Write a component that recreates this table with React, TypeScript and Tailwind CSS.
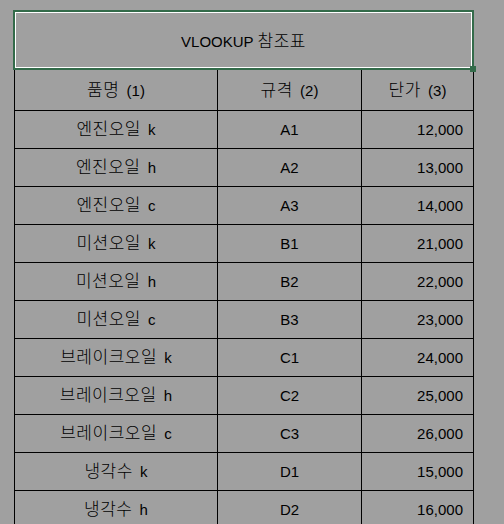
import React from 'react';

type Row = { name: string; spec: string; price: string };

const rows: Row[] = [
  { name: '엔진오일 k', spec: 'A1', price: '12,000' },
  { name: '엔진오일 h', spec: 'A2', price: '13,000' },
  { name: '엔진오일 c', spec: 'A3', price: '14,000' },
  { name: '미션오일 k', spec: 'B1', price: '21,000' },
  { name: '미션오일 h', spec: 'B2', price: '22,000' },
  { name: '미션오일 c', spec: 'B3', price: '23,000' },
  { name: '브레이크오일 k', spec: 'C1', price: '24,000' },
  { name: '브레이크오일 h', spec: 'C2', price: '25,000' },
  { name: '브레이크오일 c', spec: 'C3', price: '26,000' },
  { name: '냉각수 k', spec: 'D1', price: '15,000' },
  { name: '냉각수 h', spec: 'D2', price: '16,000' }
];

// korean runs are drawn a bit larger and lighter, like the sheet's Gulim glyphs
const Txt = ({ text }: { text: string }) => {
  const parts = text.split(/([가-힣]+)/).filter(Boolean);
  return (
    <>
      {parts.map((part, i) =>
        /[가-힣]/.test(part) ? (
          <span
            key={i}
            className={`text-[17px] font-light tracking-[0.5px] ${i < parts.length - 1 ? 'mr-[3px]' : ''}`}
          >
            {part}
          </span>
        ) : (
          <span key={i} className="whitespace-pre">
            {part}
          </span>
        )
      )}
    </>
  );
};

const cell = 'flex items-center border-r border-b border-black leading-none';

export default function App() {
  return (
    <div
      className="h-[524px] w-[504px] overflow-hidden bg-[#a0a0a0] pt-[10px] text-[15px] text-black"
      style={{ fontFamily: "'Liberation Sans', 'Noto Sans CJK KR', sans-serif" }}
    >
      <div className="relative z-10 ml-[13px] h-[60px] w-[461px] border-2 border-[#336b4a]">
        <div className="flex h-full items-center justify-center border border-white pt-[2px] leading-none">
          <Txt text="VLOOKUP 참조표" />
        </div>
        <div className="absolute -bottom-[4px] -right-[4px] h-[6px] w-[6px] bg-[#336b4a]" />
      </div>

      <div className="ml-[14px] grid w-[460px] grid-cols-[203px_144px_112px] border-l border-black">
        <div className={`${cell} h-[41px] justify-center`}>
          <Txt text="품명 (1)" />
        </div>
        <div className={`${cell} h-[41px] justify-center`}>
          <Txt text="규격 (2)" />
        </div>
        <div className={`${cell} h-[41px] justify-center`}>
          <Txt text="단가 (3)" />
        </div>

        {rows.map((row) => (
          <React.Fragment key={row.spec}>
            <div className={`${cell} h-[38px] justify-center`}>
              <Txt text={row.name} />
            </div>
            <div className={`${cell} h-[38px] justify-center`}>{row.spec}</div>
            <div className={`${cell} h-[38px] justify-end pr-[10px]`}>{row.price}</div>
          </React.Fragment>
        ))}
      </div>
    </div>
  );
}
